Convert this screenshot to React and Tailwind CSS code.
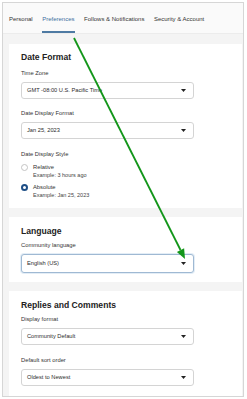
import React from 'react'

const font = { fontFamily: '"Liberation Sans", Arial, sans-serif' }

const Caret = () => (
  <svg width="5" height="3" viewBox="0 0 5 3" className="shrink-0">
    <polygon points="0,0 5,0 2.5,3" fill="#222" />
  </svg>
)

const Select = ({ value, focused, className = '' }) => (
  <div
    className={`w-[173px] flex items-center justify-between pl-[5px] pr-[7px] rounded-[3px] bg-white border text-[5.7px] text-[#2b2b2b] ${
      focused ? 'h-[19px] border-[#9fb9d3] shadow-[0_0_0_1px_#e3edf6]' : 'h-[17px] border-[#d4d4d4]'
    } ${className}`}
  >
    <span>{value}</span>
    <Caret />
  </div>
)

const Label = ({ children, className = '' }) => (
  <div className={`text-[5.8px] leading-[8px] text-[#333] ${className}`}>{children}</div>
)

const Heading = ({ children }) => (
  <h2 className="text-[8.6px] leading-[14px] font-bold text-[#222]">{children}</h2>
)

const Radio = ({ checked, title, example, className = '' }) => (
  <div className={`flex items-start gap-[5px] ${className}`}>
    {checked ? (
      <div className="mt-[0.5px] w-[7px] h-[7px] rounded-full border-[2px] border-[#1f4f86] bg-white" />
    ) : (
      <div className="mt-[0.5px] w-[7px] h-[7px] rounded-full border border-[#c4c4c4] bg-white" />
    )}
    <div>
      <div className="text-[5.8px] leading-[8px] text-[#333]">{title}</div>
      <div className="text-[5.5px] leading-[8px] text-[#444]">{example}</div>
    </div>
  </div>
)

const tabs = ['Personal', 'Preferences', 'Follows & Notifications', 'Security & Account']

export default function App() {
  return (
    <div className="relative w-[247px] h-[399px] bg-white overflow-hidden" style={font}>
      <div className="absolute left-[2px] top-[2px] w-[242px] h-[395px] border border-[#d6d6d6] flex flex-col bg-[#f4f4f4]">
        <div className="h-[31px] bg-[#fafafa] border-b border-[#ececec] flex items-end gap-[9.5px] pl-[6px]">
          {tabs.map((t) => (
            <div
              key={t}
              className={`h-[30px] flex items-center text-[6px] pt-[4px] ${
                t === 'Preferences'
                  ? 'text-[#3d70a0] border-b-[2px] border-[#4e7aa3]'
                  : 'text-[#333] border-b-[2px] border-transparent'
              }`}
            >
              {t}
            </div>
          ))}
        </div>

        <div className="flex flex-col gap-[9px] pl-[6px] pr-[1px] pt-[10px]">
          <section className="bg-white pl-[12px] pt-[6px] pb-[9px]">
            <Heading>Date Format</Heading>
            <Label className="mt-[5px]">Time Zone</Label>
            <Select className="mt-[5px]" value="GMT -08:00 U.S. Pacific Time" />
            <Label className="mt-[10px]">Date Display Format</Label>
            <Select className="mt-[5px]" value="Jan 25, 2023" />
            <Label className="mt-[11px]">Date Display Style</Label>
            <Radio className="mt-[5px]" title="Relative" example="Example: 3 hours ago" />
            <Radio className="mt-[4px]" checked title="Absolute" example="Example: Jan 25, 2023" />
          </section>

          <section className="bg-white pl-[12px] pt-[7px] pb-[9px]">
            <Heading>Language</Heading>
            <Label className="mt-[3px]">Community language</Label>
            <Select className="mt-[5px]" focused value="English (US)" />
          </section>

          <section className="bg-white pl-[12px] pt-[7px] pb-[10px]">
            <Heading>Replies and Comments</Heading>
            <Label className="mt-[3px]">Display format</Label>
            <Select className="mt-[5px]" value="Community Default" />
            <Label className="mt-[11px]">Default sort order</Label>
            <Select className="mt-[5px]" value="Oldest to Newest" />
          </section>
        </div>
      </div>

      <svg className="absolute left-0 top-0 pointer-events-none" width="247" height="399" viewBox="0 0 247 399">
        <line x1="74" y1="38" x2="180.5" y2="250" stroke="#13961a" strokeWidth="1.8" />
        <polygon points="185,259 176.9,251.9 184.1,248.3" fill="#13961a" />
      </svg>
    </div>
  )
}
